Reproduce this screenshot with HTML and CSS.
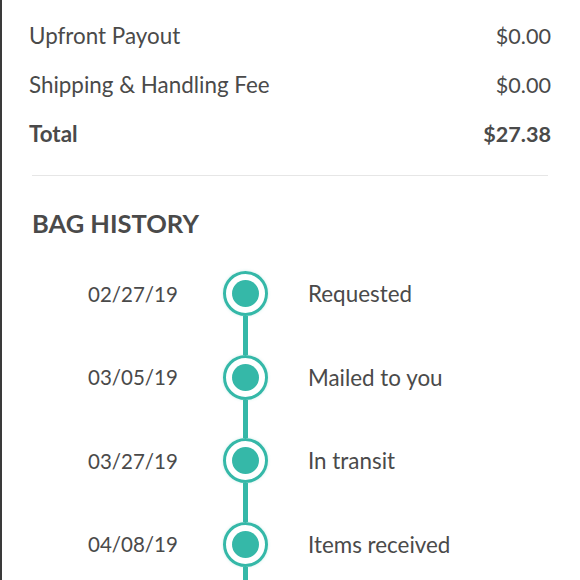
FILE: index.html
```html
<!DOCTYPE html>
<html lang="en">
<head>
    <meta charset="UTF-8">
    <title>Bag Details</title>
    <link rel="stylesheet" href="styles.css">
</head>
<body>
    <div class="page">
        <div class="summary">
            <div class="row"><span>Upfront Payout</span><span class="amount">$0.00</span></div>
            <div class="row"><span>Shipping &amp; Handling Fee</span><span class="amount">$0.00</span></div>
            <div class="row total"><span>Total</span><span class="amount">$27.38</span></div>
        </div>
        <hr class="divider">
        <h2 class="heading">BAG HISTORY</h2>
        <div class="timeline">
            <div class="step first">
                <span class="date">02/27/19</span>
                <span class="marker"><i class="seg"></i><i class="dot"></i><i class="seg"></i></span>
                <span class="label">Requested</span>
            </div>
            <div class="step">
                <span class="date">03/05/19</span>
                <span class="marker"><i class="seg"></i><i class="dot"></i><i class="seg"></i></span>
                <span class="label">Mailed to you</span>
            </div>
            <div class="step">
                <span class="date">03/27/19</span>
                <span class="marker"><i class="seg"></i><i class="dot"></i><i class="seg"></i></span>
                <span class="label">In transit</span>
            </div>
            <div class="step">
                <span class="date">04/08/19</span>
                <span class="marker"><i class="seg"></i><i class="dot"></i><i class="seg"></i></span>
                <span class="label">Items received</span>
            </div>
        </div>
    </div>
</body>
</html>
```

FILE: styles.css
```css
html, body {
    margin: 0;
    padding: 0;
    background: #fff;
}

.page {
    height: 580px;
    overflow: hidden;
    border-left: 2px solid #3a3a3a;
    padding: 11px 29px 0 27px;
    font-family: "Lato", "Noto Sans", sans-serif;
    color: #4a4a4a;
}

.row {
    display: flex;
    justify-content: space-between;
    align-items: center;
    height: 49px;
    font-size: 22.4px;
}

.amount {
    font-size: 21.6px;
}

.row.total {
    font-weight: 700;
}

.divider {
    border: none;
    border-top: 1px solid #e6e6e6;
    margin: 17px 3px 0 3px;
}

.heading {
    margin: 32px 0 0 3px;
    font-size: 25.5px;
    font-weight: 700;
    line-height: 30px;
}

.timeline {
    margin-top: 14px;
}

.step {
    display: flex;
    align-items: center;
    height: 83.5px;
    font-size: 22.4px;
}

.date {
    width: 135px;
    padding-left: 59px;
    font-size: 20.5px;
}

.marker {
    display: flex;
    flex-direction: column;
    align-items: center;
    width: 45px;
    height: 100%;
}

.seg {
    flex: 1;
    width: 5px;
    background: #35b8a8;
}

.first .seg:first-child {
    background: transparent;
}

.dot {
    width: 39px;
    height: 39px;
    border: 3px solid #35b8a8;
    border-radius: 50%;
    display: flex;
    align-items: center;
    justify-content: center;
    box-shadow: 0 0 3px rgba(53, 184, 168, 0.25);
}

.dot::after {
    content: "";
    width: 27px;
    height: 27px;
    border-radius: 50%;
    background: #35b8a8;
}

.label {
    padding-left: 40px;
}
```
